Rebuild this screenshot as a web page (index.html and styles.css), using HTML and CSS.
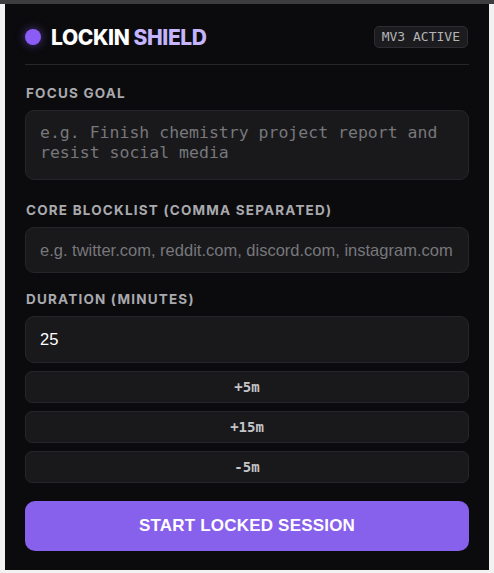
FILE: index.html
```html
<!DOCTYPE html>
<html lang="en">
<head>
  <meta charset="UTF-8">
  <meta name="viewport" content="width=device-width, initial-scale=1.0">
  <title>Lockin Shield</title>
  <link rel="stylesheet" href="styles.css">
</head>
<body>
  <div id="popup">
    <div class="header">
      <div class="brand">
        <span class="dot"></span>
        <span class="title">LOCKIN <span class="accent">SHIELD</span></span>
      </div>
      <span class="badge">MV3 ACTIVE</span>
    </div>

    <label class="fieldLabel label-first" for="goalInput">Focus Goal</label>
    <textarea id="goalInput" class="textArea" placeholder="e.g. Finish chemistry project report and resist social media"></textarea>

    <label class="fieldLabel" for="blockInput">Core Blocklist (comma separated)</label>
    <input type="text" id="blockInput" class="inputField" placeholder="e.g. twitter.com, reddit.com, discord.com, instagram.com">

    <label class="fieldLabel label-duration" for="durationInput">Duration (minutes)</label>
    <input type="text" id="durationInput" class="inputField durationField" value="25">

    <div class="quickButtons">
      <button class="quickBtn">+5m</button>
      <button class="quickBtn">+15m</button>
      <button class="quickBtn">-5m</button>
    </div>

    <button id="startButton" class="startBtn">START LOCKED SESSION</button>
  </div>
</body>
</html>
```

FILE: styles.css
```css
html, body {
  height: 100%;
}
body {
  margin: 0;
  background-color: #f2f2f2;
  border-top: 4px solid #3d3d3f;
  box-sizing: border-box;
  font-family: "Liberation Sans", Arial, sans-serif;
}
#popup {
  margin: 0 5px 0 5px;
  height: 566px;
  box-sizing: border-box;
  background-color: #0b0b0d;
  padding: 20px 20px 18px 20px;
  display: flex;
  flex-direction: column;
}
.header {
  display: flex;
  align-items: center;
  justify-content: space-between;
  height: 26px;
  padding-bottom: 14px;
  border-bottom: 1px solid #27272a;
}
.brand {
  display: flex;
  align-items: center;
  gap: 10px;
}
.dot {
  width: 16px;
  height: 16px;
  border-radius: 50%;
  background-color: #8b5cf6;
  box-shadow: 0 0 10px rgba(139, 92, 246, 0.55);
}
.title {
  font-family: Inter, "Liberation Sans", sans-serif;
  font-weight: 800;
  font-size: 21px;
  letter-spacing: -0.4px;
  color: #ffffff;
}
.accent {
  color: #c4b5fd;
}
.badge {
  font-family: "DejaVu Sans Mono", monospace;
  font-size: 13px;
  line-height: 16px;
  color: #b4b4b8;
  background-color: #1c1c1f;
  border: 1px solid #2e2e32;
  border-radius: 5px;
  padding: 2px 7px;
  margin-right: 1px;
}
.fieldLabel {
  display: block;
  font-family: Inter, "Liberation Sans", sans-serif;
  font-weight: 700;
  font-size: 13.5px;
  line-height: 17px;
  letter-spacing: 1.2px;
  text-transform: uppercase;
  color: #a9a9ae;
  margin: 22px 0 8px 1px;
}
.label-first {
  margin-top: 20px;
}
.label-duration {
  margin-top: 18px;
}
.textArea,
.inputField {
  display: block;
  width: 100%;
  box-sizing: border-box;
  background-color: #19191b;
  border: 1px solid #26262a;
  border-radius: 9px;
  color: #ffffff;
  outline: none;
  margin: 0;
}
.textArea {
  height: 70px;
  resize: none;
  padding: 12px 14px;
  font-family: "DejaVu Sans Mono", monospace;
  font-size: 16.5px;
  line-height: 20px;
}
.inputField {
  height: 46px;
  padding: 0 14px;
  font-family: "Liberation Sans", Arial, sans-serif;
  font-size: 16.5px;
}
.durationField {
  height: 47px;
}
.textArea::placeholder,
.inputField::placeholder {
  color: #77777c;
}
.quickButtons {
  display: flex;
  flex-direction: column;
  gap: 8px;
  margin-top: 8px;
}
.quickBtn {
  height: 32px;
  background-color: #19191b;
  border: 1px solid #26262a;
  border-radius: 7px;
  color: #c4c4c8;
  font-family: "DejaVu Sans Mono", monospace;
  font-weight: 700;
  font-size: 14px;
  cursor: pointer;
}
.startBtn {
  margin-top: 18px;
  height: 50px;
  background-color: #8760ec;
  border: none;
  border-radius: 10px;
  color: #ffffff;
  font-family: "Liberation Sans", Arial, sans-serif;
  font-weight: 700;
  font-size: 17px;
  letter-spacing: 0.2px;
  cursor: pointer;
}
```
